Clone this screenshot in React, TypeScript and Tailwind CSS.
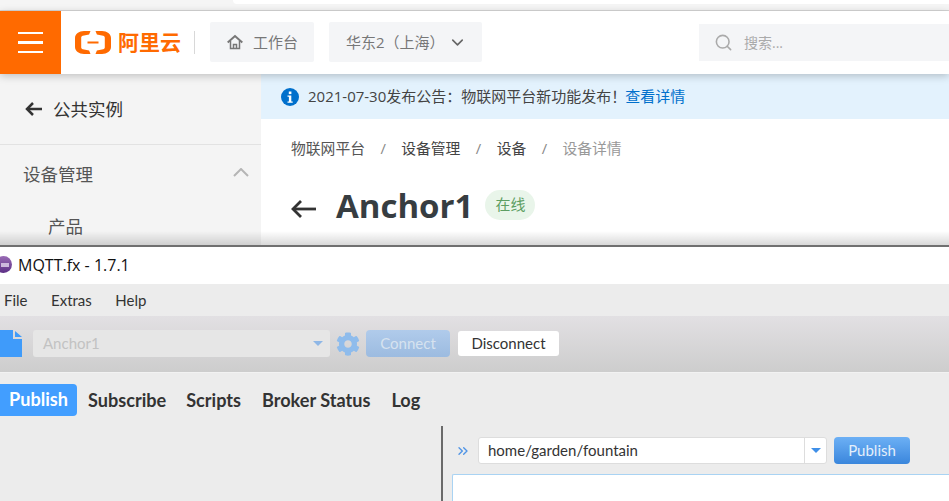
import { ChevronDown, ChevronsRight, Search } from 'lucide-react'
import { FaCog } from 'react-icons/fa'

const cjk = "font-['Open_Sans','Noto_Sans_CJK_SC',sans-serif]"
const lato = "font-['Lato','Noto_Sans',sans-serif]"

function AliyunMark() {
  return (
    <svg width="36" height="23" viewBox="0 0 36 23" fill="#ff6a00">
      <path d="M9 0h6.500l-1.400 3.400-6.300 1.400c-1 .2-1.600 1-1.600 2v9.400c0 1 .6 1.800 1.600 2l6.300 1.400 1.400 3.400H9c-5 0-9-3-9-7V7c0-4 4-7 9-7z" />
      <path d="M27 0h-6.500l1.400 3.400 6.300 1.400c1 .2 1.600 1 1.600 2v9.400c0 1-.6 1.800-1.600 2l-6.300 1.400-1.400 3.400H27c5 0 9-3 9-7V7c0-4-4-7-9-7z" />
      <rect x="12.500" y="10.500" width="11" height="2" />
    </svg>
  )
}

function BackArrow({ w, h, sw, color }: { w: number; h: number; sw: number; color: string }) {
  return (
    <svg width={w} height={h} viewBox={`0 0 ${w} ${h}`} fill="none" stroke={color} strokeWidth={sw}>
      <path d={`M${w} ${h / 2}H2`} />
      <path d={`M${h / 2 + 1} 1L2 ${h / 2}l${h / 2 - 1} ${h / 2 - 1}`} />
    </svg>
  )
}

function HomeGlyph() {
  return (
    <svg width="16" height="16" viewBox="0 0 16 16" fill="none" stroke="#777" strokeWidth="2">
      <path d="M.7 8.500L8 2l7.300 6.500" />
      <path d="M3.500 7v7.500h9V7" strokeWidth="1.500" />
      <path d="M6.500 14.500v-4h3v4" strokeWidth="1.500" />
    </svg>
  )
}

function InfoGlyph() {
  return (
    <svg width="18" height="18" viewBox="0 0 18 18">
      <circle cx="9" cy="9" r="9" fill="#0070cc" />
      <rect x="7.800" y="3.500" width="2.600" height="2.600" fill="#fff" />
      <path d="M6.500 7.500h3.800v6h1.400v1.200H6.500v-1.200h1.400V8.700H6.500z" fill="#fff" />
    </svg>
  )
}

function FileGlyph() {
  return (
    <svg width="23" height="27" viewBox="0 0 23 27">
      <path d="M0 0h13v9h9v18H0z" fill="#3f9bfa" />
      <path d="M15 1l7 6h-7z" fill="#3f9bfa" />
    </svg>
  )
}

function Header() {
  return (
    <div className="relative z-10 flex h-[63px] items-center bg-white shadow-[0_2px_8px_rgba(0,0,0,0.22)]">
      <div className="flex h-full w-[61px] flex-col items-center justify-center gap-[7px] bg-[#ff6a00]">
        <div className="h-[2.500px] w-[25px] bg-white" />
        <div className="h-[2.500px] w-[25px] bg-white" />
        <div className="h-[2.500px] w-[25px] bg-white" />
      </div>
      <div className="ml-[14px]">
        <AliyunMark />
      </div>
      <span className="ml-[7px] w-[63px] text-[21px] leading-none font-bold text-[#ff6a00]">阿里云</span>
      <div className="ml-[13px] h-[23px] w-px bg-[#d8d8d8]" />
      <div className="mb-[1px] ml-[15px] flex h-[40px] w-[104px] items-center rounded-[2px] bg-[#f4f5f7] pl-[17px] text-[15px] text-[#777]">
        <HomeGlyph />
        <span className="ml-[10px]">工作台</span>
      </div>
      <div className="mb-[1px] ml-[15px] flex h-[40px] w-[153px] items-center rounded-[2px] bg-[#f4f5f7] pl-[17px] text-[15px] text-[#777]">
        <span className="w-[90px] whitespace-nowrap">华东2（上海）</span>
        <ChevronDown className="ml-[12px] text-[#666]" size={19} />
      </div>
      <div className="ml-auto flex h-[37px] w-[250px] items-center bg-[#f4f5f7] pl-[15px] text-[14px] text-[#aaa]">
        <Search size={19} />
        <span className="ml-[11px]">搜索...</span>
      </div>
    </div>
  )
}

function Sidebar() {
  return (
    <div className="w-[261px] shrink-0 bg-[#f4f4f4]">
      <div className="flex h-[71px] items-center border-b border-[#e2e2e2] pl-[25px] text-[#333]">
        <BackArrow w={17} h={14} sw={2.500} color="#333" />
        <span className="ml-[11px] text-[17.500px]">公共实例</span>
      </div>
      <div className="flex h-[58px] items-center justify-between pr-[12px] pl-[23px] text-[17.500px] text-[#555]">
        <span>设备管理</span>
        <svg width="16" height="9" viewBox="0 0 16 9" fill="none" stroke="#b5b5b5" strokeWidth="2" className="mb-[4px]">
          <path d="M1 8l7-7 7 7" />
        </svg>
      </div>
      <div className="pt-[10px] pl-[48px] text-[17.500px] leading-[26px] text-[#555]">产品</div>
    </div>
  )
}

function Content() {
  return (
    <div className="min-w-0 flex-1 bg-white">
      <div className="flex h-[45px] items-center bg-[#e3f2fd] pl-[20px] text-[15px] text-[#444]">
        <InfoGlyph />
        <span className="ml-[9px] whitespace-nowrap">2021-07-30发布公告：物联网平台新功能发布！</span>
        <span className="-ml-[1px] whitespace-nowrap text-[#0070cc]">查看详情</span>
      </div>
      <div className="flex h-[58px] items-center pl-[30px] text-[14.800px] text-[#555]">
        <span>物联网平台</span>
        <span className="mx-[15.400px] text-[#888]">/</span>
        <span className="text-[#444]">设备管理</span>
        <span className="mx-[15.400px] text-[#888]">/</span>
        <span className="text-[#444]">设备</span>
        <span className="mx-[15.400px] text-[#888]">/</span>
        <span className="text-[#999]">设备详情</span>
      </div>
      <div className="flex items-center pt-[6px] pl-[30px]">
        <div className="mt-[6px]">
          <BackArrow w={25} h={18} sw={2.800} color="#333" />
        </div>
        <span className="ml-[20px] text-[33px] leading-[46px] font-bold text-[#373d41]">Anchor1</span>
        <span className="mb-[3px] ml-[12px] flex h-[30px] w-[50px] items-center justify-center rounded-full bg-[#e9f5ea] text-[15px] text-[#5d9e63]">在线</span>
      </div>
    </div>
  )
}

function Toolbar() {
  return (
    <div className={`flex h-[56px] items-center bg-gradient-to-b from-[#e2e0e3] to-[#cdcdcd] pb-[1px] ${lato}`}>
      <FileGlyph />
      <div className="ml-[10px] flex h-[27px] w-[297px] items-center justify-between rounded-[3px] bg-[#e6e6e6] pr-[7px] pl-[10px] text-[15px] text-[#c2c2c2]">
        <span>Anchor1</span>
        <div className="h-0 w-0 border-x-[5px] border-t-[5px] border-x-transparent border-t-[#8fb7e6]" />
      </div>
      <FaCog className="ml-[6px] text-[#8fbcec]" size={24} />
      <div className="ml-[6px] flex h-[27px] w-[84px] items-center justify-center rounded-[4px] bg-gradient-to-b from-[#b0cbeb] to-[#9cbbe0] text-[15px] text-[#d6e2ef]">
        Connect
      </div>
      <div className="ml-[8px] flex h-[25px] w-[101px] items-center justify-center rounded-[3px] bg-white text-[15px] text-[#333]">
        Disconnect
      </div>
    </div>
  )
}

function Tabs() {
  return (
    <div className={`flex h-[53px] items-start pt-[11px] text-[18.100px] font-bold text-[#333] ${lato}`}>
      <div className="flex h-[32px] w-[77px] items-center justify-center rounded-r-[4px] bg-[#429eff] text-white">Publish</div>
      <span className="ml-[11px] leading-[32px]">Subscribe</span>
      <span className="ml-[20px] leading-[32px]">Scripts</span>
      <span className="ml-[21px] leading-[32px]">Broker Status</span>
      <span className="ml-[21px] leading-[32px]">Log</span>
    </div>
  )
}

function PublishPane() {
  return (
    <div className={`flex min-h-0 flex-1 ${lato}`}>
      <div className="w-[441px] shrink-0" />
      <div className="flex min-w-0 flex-1 flex-col border-l-2 border-[#6a6a6a] pl-[9px]">
        <div className="flex h-[48px] items-start pt-[11px]">
          <ChevronsRight className="mt-[6px] ml-[3px] text-[#4f94e6]" size={16} />
          <div className="ml-[7px] flex h-[27px] w-[349px] items-center rounded-[3px] border border-[#ddd] bg-white">
            <span className="flex-1 pl-[9px] text-[15px] text-[#333]">home/garden/fountain</span>
            <div className="flex h-full w-[22px] items-center justify-center border-l border-[#ddd]">
              <div className="h-0 w-0 border-x-[5px] border-t-[5px] border-x-transparent border-t-[#3f8fe8]" />
            </div>
          </div>
          <div className="ml-[7px] flex h-[27px] w-[76px] items-center justify-center rounded-[4px] bg-gradient-to-b from-[#6cb0f5] to-[#3a86dc] text-[15px] text-[#e4effb]">
            Publish
          </div>
        </div>
        <div className="min-h-0 flex-1 rounded-tl-[2px] border-t border-l border-[#a9d3f3] bg-white" />
      </div>
    </div>
  )
}

export default function App() {
  return (
    <div className={`flex h-[501px] w-[949px] flex-col overflow-hidden bg-white ${cjk}`}>
      {/* browser window behind */}
      <div className="relative h-[245px] shrink-0 overflow-hidden">
        <div className="flex h-[10px] justify-end bg-[#f5f5f5]">
          <div className="h-[4px] w-[716px] rounded-bl-[6px] bg-white" />
        </div>
        <div className="h-px bg-[#d6d6d6]" />
        <Header />
        <div className="flex h-[171px]">
          <Sidebar />
          <Content />
        </div>
        <div className="absolute inset-x-0 bottom-0 h-[14px] bg-gradient-to-b from-transparent to-[#00000026]" />
      </div>

      {/* MQTT.fx window */}
      <div className="flex min-h-0 flex-1 flex-col border-t-2 border-[#707070]">
        <div className="flex h-[37px] shrink-0 items-center bg-white pb-[2px] text-[16px] text-[#111]">
          <div className="-ml-[5px] flex h-[17px] w-[17px] items-center justify-center rounded-full bg-gradient-to-b from-[#9a6bb5] to-[#5d2f86]">
            <div className="ml-[3px] h-[4px] w-[8px] bg-[#cdb9dd]" />
          </div>
          <span className="ml-[6px]">MQTT.fx - 1.7.1</span>
        </div>
        <div className={`flex h-[32px] shrink-0 items-center gap-[23.500px] bg-[#ececec] pt-[1px] pl-[4px] text-[15px] text-[#333] ${lato}`}>
          <span>File</span>
          <span>Extras</span>
          <span>Help</span>
        </div>
        <Toolbar />
        <div className="flex min-h-0 flex-1 flex-col border-t border-[#f2f2f2] bg-[#ececec]">
          <Tabs />
          <PublishPane />
        </div>
      </div>
    </div>
  )
}
